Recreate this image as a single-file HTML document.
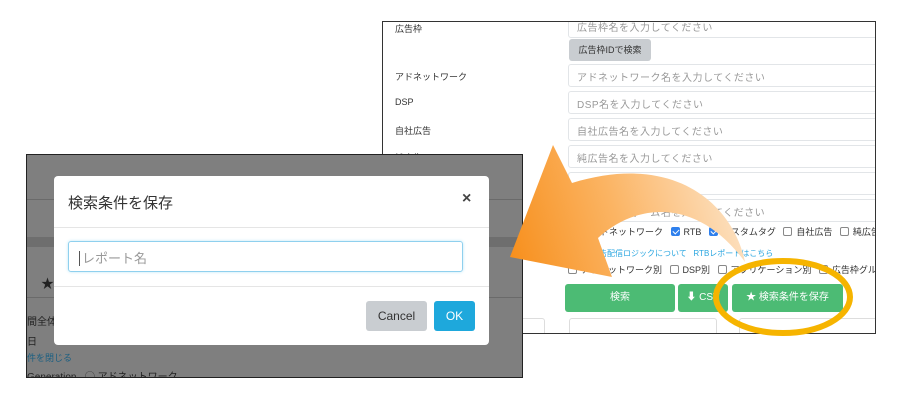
<!DOCTYPE html>
<html><head><meta charset="utf-8"><style>
*{box-sizing:border-box;margin:0;padding:0}
body{width:900px;height:400px;background:#fff;position:relative;overflow:hidden;font-family:"Liberation Sans","Noto Sans CJK JP",sans-serif;color:#333}
.abs{position:absolute}
#rp{left:382px;top:21px;width:494px;height:313px;border:1.5px solid #333;background:#fff;overflow:hidden}
.lab{position:absolute;left:12px;font-size:9px;color:#333}
.inp{position:absolute;left:185px;width:320px;height:23px;border:1px solid #e2e5e8;border-radius:3px;font-size:10px;color:#999;padding:4px 8px;letter-spacing:.5px}
.cb{display:inline-block;width:9px;height:9px;border:1px solid #888;border-radius:2px;vertical-align:-1px;margin-right:4px;background:#fff}
.cb.on{background:#2f80ed;border-color:#2f80ed;position:relative}
.cb.on:after{content:"";position:absolute;left:2px;top:0px;width:3px;height:5px;border:solid #fff;border-width:0 1.5px 1.5px 0;transform:rotate(45deg)}
.g{position:absolute;top:262px;height:28px;background:#4cbb74;border-radius:3px;color:#fff;font-size:10px;text-align:center;line-height:28px}
#lp{left:26px;top:154px;width:497px;height:224px;border:1.5px solid #222;background:#7f7f7f;overflow:hidden}
#modal{left:54px;top:176px;width:435px;height:169px;background:#fff;border-radius:4px}
</style></head><body>
<div id="rp" class="abs">
 <div class="lab" style="top:0">広告枠</div>
 <div class="inp" style="top:-6px;height:22px;padding-top:2px">広告枠名を入力してください</div>
 <div class="abs" style="left:186px;top:17px;width:82px;height:22px;background:#c9cdd1;border-radius:3px;font-size:9px;line-height:22px;text-align:center;color:#333">広告枠IDで検索</div>
 <div class="lab" style="top:48px">アドネットワーク</div>
 <div class="inp" style="top:42px">アドネットワーク名を入力してください</div>
 <div class="lab" style="top:75px">DSP</div>
 <div class="inp" style="top:69px">DSP名を入力してください</div>
 <div class="lab" style="top:102px">自社広告</div>
 <div class="inp" style="top:96px">自社広告名を入力してください</div>
 <div class="lab" style="top:129px">純広告</div>
 <div class="inp" style="top:123px">純広告名を入力してください</div>
 <div class="inp" style="top:150px"></div>
 <div class="inp" style="top:177px">プラットフォーム名を入力してください</div>
 <div class="abs" style="left:195px;top:203px;font-size:9px;white-space:nowrap"><span class="cb on"></span>アドネットワーク &nbsp;&nbsp;<span class="cb on"></span>RTB &nbsp;&nbsp;<span class="cb on"></span>カスタムタグ &nbsp;&nbsp;<span class="cb"></span>自社広告 &nbsp;&nbsp;<span class="cb"></span>純広告</div>
 <div class="abs" style="left:200px;top:226px;font-size:8px;color:#2aa6e0;white-space:nowrap">純広告配信ロジックについて &nbsp;&nbsp;RTBレポートはこちら</div>
 <div class="abs" style="left:185px;top:241px;font-size:9px;white-space:nowrap"><span class="cb"></span>アドネットワーク別 &nbsp;&nbsp;<span class="cb"></span>DSP別 &nbsp;&nbsp;<span class="cb"></span>アプリケーション別 &nbsp;&nbsp;<span class="cb"></span>広告枠グループ別</div>
 <div class="g" style="left:182px;width:110px">検索</div>
 <div class="g" style="left:295px;width:50px">⬇ CSV</div>
 <div class="g" style="left:349px;width:111px">★ 検索条件を保存</div>
 <div class="abs" style="left:100px;top:296px;width:62px;height:30px;border:1px solid #ddd;border-radius:3px"></div>
 <div class="abs" style="left:186px;top:296px;width:148px;height:30px;border:1px solid #ddd;border-radius:3px"></div>
 <div class="abs" style="left:356px;top:296px;width:150px;height:30px;border:1px solid #ddd;border-radius:3px"></div>
</div>
<div id="lp" class="abs">
 <div class="abs" style="left:0;top:44px;width:500px;height:1px;background:#6a6a6a"></div>
 <div class="abs" style="left:0;top:82px;width:500px;height:10px;background:#6e6e6e"></div>
 <div class="abs" style="left:14px;top:118px;font-size:13px;color:#222">★</div>
 <div class="abs" style="left:0;top:142px;width:500px;height:1px;background:#6a6a6a"></div>
 <div class="abs" style="left:0;top:158px;font-size:10px;color:#222">間全体</div>
 <div class="abs" style="left:0;top:178px;font-size:10px;color:#222">日</div>
 <div class="abs" style="left:0;top:196px;font-size:9px;color:#1a5f82">件を閉じる</div>
 <div class="abs" style="left:0;top:213px;font-size:10px;color:#222;white-space:nowrap">Generation &nbsp;&nbsp;◯ アドネットワーク</div>
</div>
<div id="modal" class="abs">
 <div class="abs" style="left:14px;top:16px;font-size:15px;color:#333">検索条件を保存</div>
 <div class="abs" style="left:408px;top:14px;font-size:16px;color:#444;font-weight:bold">×</div>
 <div class="abs" style="left:0;top:51px;width:435px;height:1px;background:#e5e5e5"></div>
 <div class="abs" style="left:14px;top:65px;width:395px;height:31px;border:1.5px solid #8fd0ee;border-radius:3px;box-shadow:0 0 3px #bfe6f7;font-size:13px;color:#999;padding:6px 10px"><span style="border-left:1px solid #555;padding-left:2px">レポート名</span></div>
 <div class="abs" style="left:0;top:110px;width:435px;height:1px;background:#e5e5e5"></div>
 <div class="abs" style="left:312px;top:125px;width:61px;height:30px;background:#c9cdd1;border-radius:3px;font-size:12px;line-height:30px;text-align:center;color:#333">Cancel</div>
 <div class="abs" style="left:380px;top:125px;width:41px;height:30px;background:#1ea8dc;border-radius:3px;font-size:12px;line-height:30px;text-align:center;color:#fff">OK</div>
</div>
<svg class="abs" style="left:0;top:0" width="900" height="400">
 <defs><linearGradient id="gr" x1="510" y1="250" x2="745" y2="180" gradientUnits="userSpaceOnUse">
  <stop offset="0" stop-color="#f7901e"/><stop offset=".45" stop-color="#fbb463"/><stop offset="1" stop-color="#fde6cc"/></linearGradient></defs>
 <path d="M553,145 L510,257 L612,277 L598,238 C640,200 700,200 745,262 C735,210 680,150 572,183 Z" fill="url(#gr)"/>
 <ellipse cx="783" cy="297" rx="67" ry="36" fill="none" stroke="#f6b400" stroke-width="6"/>
</svg>
</body></html>
